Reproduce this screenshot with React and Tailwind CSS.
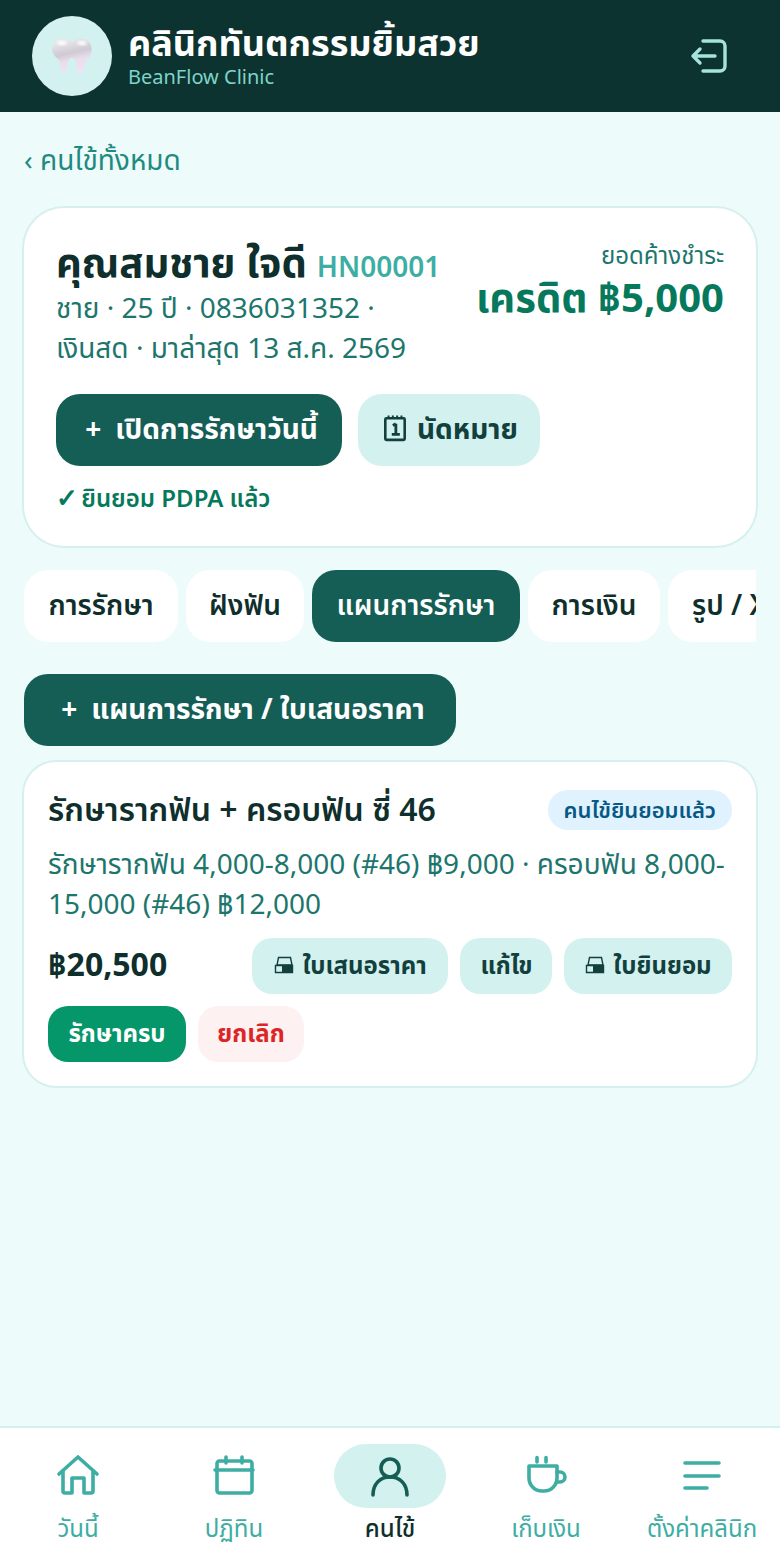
import React from "react";

const Tooth = () => (
  <svg width="40" height="36" viewBox="0 0 40 36">
    <defs>
      <linearGradient id="toothFill" x1="0.35" y1="0" x2="0.6" y2="1">
        <stop offset="0" stopColor="#eceaee" />
        <stop offset="0.42" stopColor="#cfcad3" />
        <stop offset="0.62" stopColor="#e8deeb" />
        <stop offset="1" stopColor="#f4e0f7" />
      </linearGradient>
      <filter id="toothBlur">
        <feGaussianBlur stdDeviation="1.5" />
      </filter>
    </defs>
    <path
      d="M10 1C14 0 17 2 20 4 23 1 28 0 33 1 38 3 41 9 39 15 38 20 35 22 33 25 32 29 31 34 28 35 25 36 25 30 24 26 23 21 21 19 19 20 16 21 16 25 15 29 14 33 12 36 10 34 8 31 8 25 7 22 4 19 1 17 0 12 0 6 4 2 10 1Z"
      fill="url(#toothFill)"
    />
    <ellipse cx="10" cy="5" rx="4.5" ry="2" fill="#ffffff" filter="url(#toothBlur)" />
    <ellipse cx="30" cy="5" rx="4.5" ry="2" fill="#ffffff" filter="url(#toothBlur)" />
  </svg>
);

const LogoutIcon = () => (
  <svg width="44" height="44" viewBox="0 0 44 44" fill="none" stroke="#a5e3dc" strokeWidth="3.4" strokeLinecap="round" strokeLinejoin="round">
    <path d="M17 7H34a5 5 0 0 1 5 5V32a5 5 0 0 1-5 5H17" />
    <path d="M29 22H7M14 15L7 22L14 29" />
  </svg>
);

const CalendarGlyph = () => (
  <svg width="24" height="28" viewBox="0 0 22 26" fill="none" className="shrink-0">
    <rect x="2" y="4" width="18" height="20" rx="1" stroke="#12403d" strokeWidth="2.4" />
    <path d="M5 1.5v3M9 1.5v3M13 1.5v3M17 1.5v3" stroke="#12403d" strokeWidth="1.8" />
    <path d="M11.8 9v10M9 10.6l2.8-1.6M8 19h7.5" stroke="#12403d" strokeWidth="2.6" />
  </svg>
);

const PrintIcon = () => (
  <svg width="20" height="18" viewBox="0 0 20 18" fill="none" className="shrink-0">
    <path d="M4.5 1.5H16.5L18 9H3z" stroke="#12403d" strokeWidth="1.4" />
    <path d="M1.5 9.5H18.5V16.5H1.5z" stroke="#12403d" strokeWidth="1.4" />
    <path d="M8 9.5H18.5V16.5H8z" fill="#12403d" />
  </svg>
);

const navStroke = {
  fill: "none",
  stroke: "currentColor",
  strokeWidth: 3.6,
  strokeLinecap: "round",
  strokeLinejoin: "round",
};

const HomeIcon = () => (
  <svg width="44" height="44" viewBox="0 0 44 44" {...navStroke}>
    <path d="M3 20L22 3L41 20" />
    <path d="M7 17V37a2 2 0 0 0 2 2H16V24H28V39H35a2 2 0 0 0 2-2V17" />
  </svg>
);

const CalendarIcon = () => (
  <svg width="44" height="44" viewBox="0 0 44 44" {...navStroke}>
    <rect x="5" y="7" width="35" height="32" rx="2.5" />
    <path d="M3 16H41M14 3V9M30 3V9" />
  </svg>
);

const UserIcon = () => (
  <svg width="44" height="44" viewBox="0 0 44 44" {...navStroke}>
    <circle cx="22" cy="14" r="9" />
    <path d="M5 41C5 30 12 23 22 23S39 30 39 41" />
  </svg>
);

const CupIcon = () => (
  <svg width="44" height="44" viewBox="0 0 44 44" {...navStroke}>
    <path d="M5 12H33V24a13 13 0 0 1-13 13H18A13 13 0 0 1 5 24Z" />
    <path d="M33 18h3a5 5 0 0 1 0 10h-3" />
    <path d="M13 3.5V8M22 3.5V8" />
  </svg>
);

const MenuIcon = () => (
  <svg width="44" height="44" viewBox="0 0 44 44" {...navStroke}>
    <path d="M5 9H39M5 22H39M5 34H27" />
  </svg>
);

const tabs = [
  { label: "การรักษา", size: "w-[154px]" },
  { label: "ฝังฟัน", size: "w-[118px]" },
  { label: "แผนการรักษา", size: "w-[208px]", active: true },
  { label: "การเงิน", size: "w-[132px]" },
  { label: "รูป / X-ray", size: "px-6" },
];

const navItems = [
  { label: "วันนี้", icon: <HomeIcon /> },
  { label: "ปฏิทิน", icon: <CalendarIcon /> },
  { label: "คนไข้", icon: <UserIcon />, active: true },
  { label: "เก็บเงิน", icon: <CupIcon /> },
  { label: "ตั้งค่าคลินิก", icon: <MenuIcon /> },
];

const SoftButton = ({ size, children }) => (
  <button className={`h-14 ${size} pb-[2px] pl-px rounded-[20px] bg-[#d3f1ef] text-[#12403d] text-[24px] font-bold flex items-center justify-center gap-2 whitespace-nowrap`}>
    {children}
  </button>
);

export default function App() {
  return (
    <div className="min-h-[1560px] flex flex-col bg-[#edfbfb] font-['Noto_Sans','Noto_Sans_Thai',sans-serif] text-[#0f2f2d]">
      <header className="h-28 bg-[#0d3331] flex items-center justify-between pl-8 pr-[50px]">
        <div className="flex items-center gap-4">
          <div className="w-20 h-20 rounded-full bg-[#d3f1ef] flex items-center justify-center">
            <Tooth />
          </div>
          <div className="flex flex-col">
            <div className="text-[36px] leading-[42px] font-bold text-white">คลินิกทันตกรรมยิ้มสวย</div>
            <div className="text-[20px] leading-[26px] text-[#7ed4c8]">BeanFlow Clinic</div>
          </div>
        </div>
        <LogoutIcon />
      </header>

      <main className="flex-1 px-6 pt-[30px]">
        <div className="text-[28px] leading-[34px] text-[#1f8a80]">‹ คนไข้ทั้งหมด</div>

        <section className="mt-8 bg-white ring-2 ring-[#d5f0ee] rounded-[40px] px-8 pt-[30px] pb-[31px]">
          <div className="flex justify-between">
            <div>
              <div className="h-12 flex items-baseline gap-[10px] whitespace-nowrap">
                <span className="text-[40px] leading-[48px] font-bold">คุณสมชาย ใจดี</span>
                <span className="text-[28px] font-semibold text-[#3eada3]">HN00001</span>
              </div>
              <div className="mt-[1px] text-[28px] leading-[40px] text-[#1d766d] whitespace-nowrap">
                ชาย · 25 ปี · 0836031352 ·
                <br />
                เงินสด · มาล่าสุด 13 ส.ค. 2569
              </div>
            </div>
            <div className="mt-[1px] flex flex-col items-end whitespace-nowrap">
              <div className="text-[24px] leading-[32px] text-[#1d766d]">ยอดค้างชำระ</div>
              <div className="text-[40px] leading-[52px] font-bold text-[#06795c]">เครดิต ฿5,000</div>
            </div>
          </div>

          <div className="flex gap-4 mt-[27px]">
            <button className="h-[72px] w-[286px] pb-1 pl-[5px] rounded-[24px] bg-[#155e56] text-white text-[28px] font-bold flex items-center justify-center gap-[14px] whitespace-nowrap">
              <span>+</span> เปิดการรักษาวันนี้
            </button>
            <button className="h-[72px] w-[182px] pb-1 pl-[3px] rounded-[24px] bg-[#d3f1ef] text-[#12403d] text-[28px] font-bold flex items-center justify-center gap-[10px] whitespace-nowrap">
              <CalendarGlyph /> นัดหมาย
            </button>
          </div>

          <div className="mt-[13px] h-9 text-[24px] leading-[36px] font-semibold text-[#06795c]">
            <span className="font-bold text-[26px] mr-[-3px]">✓</span> ยินยอม PDPA แล้ว
          </div>
        </section>

        <div className="mt-6 flex gap-2 overflow-hidden">
          {tabs.map((t) => (
            <div
              key={t.label}
              className={`h-[72px] ${t.size} pb-1 shrink-0 rounded-[24px] flex items-center justify-center text-[28px] font-semibold whitespace-nowrap ${
                t.active ? "bg-[#155e56] text-white" : "bg-white text-[#0f2f2d]"
              }`}
            >
              {t.label}
            </div>
          ))}
        </div>

        <button className="mt-8 h-[72px] w-[432px] pb-1 pl-[6px] rounded-[24px] bg-[#155e56] text-white text-[28px] font-bold flex items-center justify-center gap-[14px] whitespace-nowrap">
          <span>+</span> แผนการรักษา / ใบเสนอราคา
        </button>

        <section className="mt-4 bg-white ring-2 ring-[#d5f0ee] rounded-[32px] px-6 pt-[23px] pb-6">
          <div className="flex items-center justify-between">
            <div className="text-[32px] leading-[48px] font-semibold whitespace-nowrap">รักษารากฟัน + ครอบฟัน ซี่ 46</div>
            <div className="mt-[2px] h-10 px-4 pb-[2px] rounded-full bg-[#e0f2fe] text-[#075985] text-[22px] font-semibold flex items-center whitespace-nowrap">
              คนไข้ยินยอมแล้ว
            </div>
          </div>
          <div className="text-[28px] leading-[40px] text-[#1d766d] mt-[10px]">
            รักษารากฟัน 4,000-8,000 (#46) ฿9,000 · ครอบฟัน 8,000-15,000 (#46) ฿12,000
          </div>
          <div className="flex items-center justify-between mt-[15px]">
            <div className="text-[32px] font-bold pb-1">฿20,500</div>
            <div className="flex gap-3">
              <SoftButton size="w-[196px]"><PrintIcon /> ใบเสนอราคา</SoftButton>
              <SoftButton size="w-[92px]">แก้ไข</SoftButton>
              <SoftButton size="w-[168px]"><PrintIcon /> ใบยินยอม</SoftButton>
            </div>
          </div>
          <div className="flex gap-3 mt-3">
            <button className="h-14 w-[138px] pb-[2px] rounded-[20px] bg-[#059669] text-white text-[24px] font-bold">รักษาครบ</button>
            <button className="h-14 w-[106px] pb-[2px] rounded-[20px] bg-[#fef1f1] text-[#dc2626] text-[24px] font-bold">ยกเลิก</button>
          </div>
        </section>
      </main>

      <nav className="h-[134px] bg-white border-t-2 border-[#d5f0ee] grid grid-cols-5 pt-4">
        {navItems.map((n) => (
          <div key={n.label} className="flex flex-col items-center">
            <div
              className={`w-28 h-16 rounded-full flex items-center justify-center ${
                n.active ? "bg-[#d3f1ef] text-[#155e56]" : "text-[#3eada3]"
              }`}
            >
              {n.icon}
            </div>
            <div className={`text-[24px] leading-[36px] mt-[2px] whitespace-nowrap ${n.active ? "font-medium text-[#0f2f2d]" : "text-[#3eada3]"}`}>
              {n.label}
            </div>
          </div>
        ))}
      </nav>
    </div>
  );
}
